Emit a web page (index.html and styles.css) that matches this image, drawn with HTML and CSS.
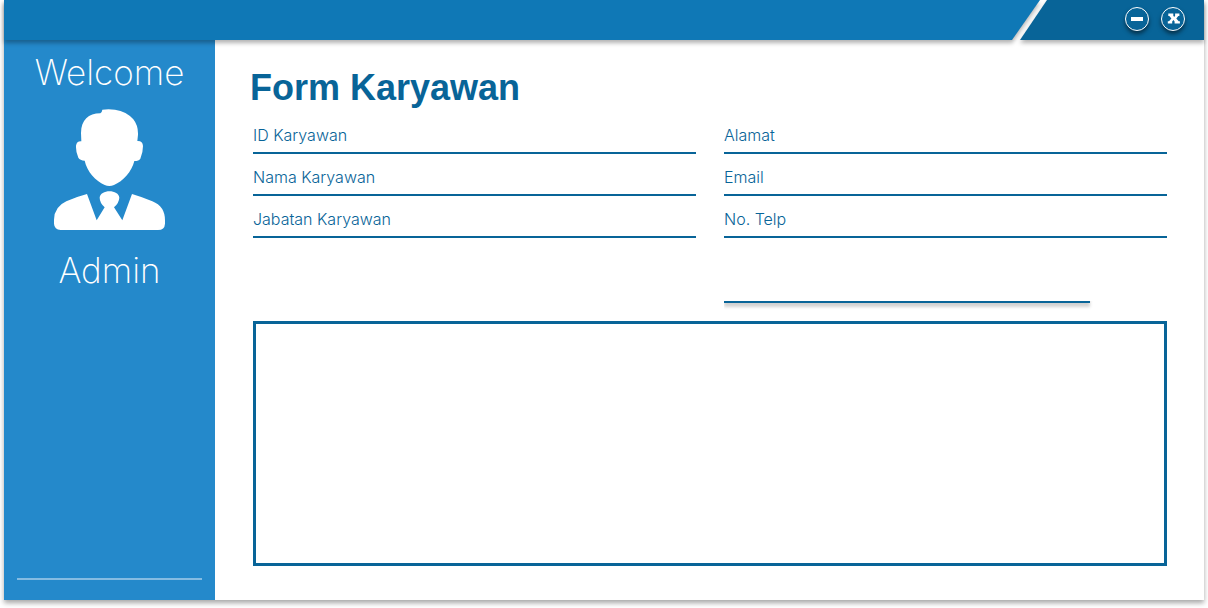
FILE: index.html
```html
<!DOCTYPE html>
<html lang="id">
<head>
<meta charset="utf-8">
<meta name="viewport" content="width=device-width, initial-scale=1">
<title>Form Karyawan</title>
<link rel="stylesheet" href="styles.css">
</head>
<body>
<div class="window">
  <header class="titlebar">
    <div class="titlebar-main"></div>
    <div class="titlebar-controls">
      <button class="control" type="button" aria-label="Minimize">
        <svg viewBox="0 0 24 24" aria-hidden="true"><circle cx="12" cy="12" r="11.5"/><rect x="6" y="10" width="12" height="4"/></svg>
      </button>
      <button class="control" type="button" aria-label="Close">
        <svg viewBox="0 0 24 24" aria-hidden="true"><circle cx="12" cy="12" r="11.5"/><path d="M7.3 6.5h5v2.2l.9 1.2.9-1.2V6.5h4.3v2.4h-1.1l-2 2.6 2.4 2.8h1.2v2.3h-5.3v-2l-1.2-1.5-1.2 1.5v2H6.8v-2.3H8l2.4-2.8-2.1-2.6h-1z"/></svg>
      </button>
    </div>
  </header>
  <div class="body">
    <aside class="sidebar">
      <p class="greeting">Welcome</p>
      <svg class="avatar" viewBox="42 26 333 363" role="img" aria-label="Admin">
        <path d="M181 39Q186 36 187 28Q205 25 225 28Q260 33 280 57Q295 76 294 103L292 122Q308 121 309 137Q309 157 301 175Q297 182 283 182C276 213 249 243 222 254Q208 260 194 254C167 241 141 214 134 181Q120 180 115 172Q107 155 108 136Q110 122 124 123L123 98C124 59 145 39 181 39Z"/>
        <path d="M141 281L170 360L194 321Q179 307 179 292C180 266 237 266 238 292Q237 308 222 321L247 360L276 281Q304 289 337 303Q375 318 375 360V370Q374 389 354 389H62Q43 388 42 370V358Q43 319 79 303Q110 289 141 281Z"/>
      </svg>
      <p class="username">Admin</p>
      <hr class="divider">
    </aside>
    <main class="content">
      <h1 class="title">Form Karyawan</h1>
      <form class="fields">
        <div class="field"><label for="id">ID Karyawan</label><input id="id" type="text"></div>
        <div class="field"><label for="alamat">Alamat</label><input id="alamat" type="text"></div>
        <div class="field"><label for="nama">Nama Karyawan</label><input id="nama" type="text"></div>
        <div class="field"><label for="email">Email</label><input id="email" type="email"></div>
        <div class="field"><label for="jabatan">Jabatan Karyawan</label><input id="jabatan" type="text"></div>
        <div class="field"><label for="telp">No. Telp</label><input id="telp" type="tel"></div>
        <input class="search" type="search" aria-label="Cari karyawan">
      </form>
      <section class="records" aria-label="Data karyawan"></section>
    </main>
  </div>
</div>
</body>
</html>
```
FILE: styles.css
```css
* {
  box-sizing: border-box;
}

body {
  margin: 0;
  min-height: 100vh;
  display: flex;
  padding: 0 4px 8px;
  background: #fff;
  color: #086498;
  font-family: Inter, "Liberation Sans", sans-serif;
  font-weight: 300;
}

.window {
  flex: 1;
  display: flex;
  flex-direction: column;
  background: #fff;
  box-shadow: 0 3px 5px rgba(0, 0, 0, 0.35);
}

.titlebar {
  display: flex;
  height: 40px;
  z-index: 1;
  filter: drop-shadow(0 3px 2px rgba(0, 0, 0, 0.3));
}

.titlebar-main {
  flex: 1;
  background: #0f78b6;
  clip-path: polygon(0 0, 100% 0, calc(100% - 28px) 100%, 0 100%);
}

.titlebar-controls {
  display: flex;
  justify-content: flex-end;
  align-items: center;
  gap: 12px;
  width: 184px;
  margin-left: -20px;
  padding: 0 19px 2px 0;
  background: #086498;
  clip-path: polygon(27px 0, 100% 0, 100% 100%, 0 100%);
}

.control {
  width: 24px;
  height: 24px;
  padding: 0;
  border: 0;
  background: none;
  cursor: pointer;
  filter: drop-shadow(0 3px 2px rgba(0, 0, 0, 0.5));
}

.control svg {
  display: block;
  fill: #fff;
}

.control circle {
  fill: #086498;
  stroke: #fff;
  stroke-width: 1;
}

.body {
  flex: 1;
  display: flex;
}

.sidebar {
  flex: none;
  display: flex;
  flex-direction: column;
  align-items: center;
  width: 211px;
  padding: 12px 13px 20px;
  background: #2489cb;
  color: #fff;
}

.greeting,
.username {
  margin: 0;
  font-size: 35px;
  font-weight: 200;
  line-height: 40px;
}

.avatar {
  width: 111px;
  height: 121px;
  margin: 17px 0 20px;
  fill: #fff;
}

.divider {
  width: 100%;
  height: 2px;
  margin: auto 0 0;
  border: 0;
  background: #85bce2;
}

.content {
  flex: 1;
  display: flex;
  flex-direction: column;
  padding: 27px 37px 34px 38px;
}

.title {
  margin: 0 0 3px -3px;
  font-family: "Liberation Sans", sans-serif;
  font-size: 36px;
  font-weight: 700;
  line-height: 42px;
}

.fields {
  display: grid;
  grid-template-columns: 1fr 1fr;
  column-gap: 28px;
}

.field {
  display: flex;
  gap: 8px;
  height: 42px;
  padding-top: 13px;
  border-bottom: 2px solid #086498;
  font-size: 16px;
  line-height: 20px;
}

.field input {
  flex: 1;
  min-width: 0;
  height: 20px;
  padding: 0;
  border: 0;
  outline: 0;
  background: none;
  color: inherit;
  font: inherit;
}

.search {
  grid-column: 2;
  height: 32px;
  margin: 33px 77px 18px 0;
  padding: 0;
  border: 0;
  border-bottom: 2px solid #086498;
  outline: 0;
  background: #fff;
  color: inherit;
  font: inherit;
  box-shadow: 0 4px 3px rgba(0, 0, 0, 0.18);
  clip-path: inset(30px -6px -10px 0);
}

.records {
  flex: 1;
  border: 3px solid #086498;
}
```
